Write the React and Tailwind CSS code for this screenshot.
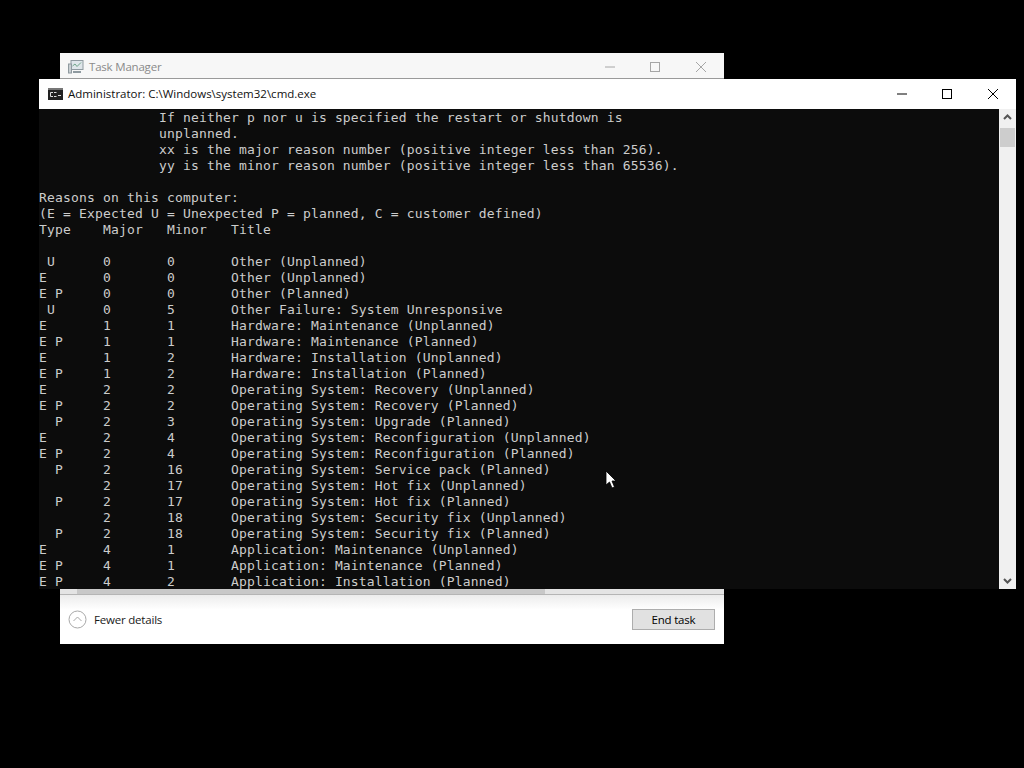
const lines = [
  "               If neither p nor u is specified the restart or shutdown is",
  "               unplanned.",
  "               xx is the major reason number (positive integer less than 256).",
  "               yy is the minor reason number (positive integer less than 65536).",
  "",
  "Reasons on this computer:",
  "(E = Expected U = Unexpected P = planned, C = customer defined)",
  "Type    Major   Minor   Title",
  "",
  " U      0       0       Other (Unplanned)",
  "E       0       0       Other (Unplanned)",
  "E P     0       0       Other (Planned)",
  " U      0       5       Other Failure: System Unresponsive",
  "E       1       1       Hardware: Maintenance (Unplanned)",
  "E P     1       1       Hardware: Maintenance (Planned)",
  "E       1       2       Hardware: Installation (Unplanned)",
  "E P     1       2       Hardware: Installation (Planned)",
  "E       2       2       Operating System: Recovery (Unplanned)",
  "E P     2       2       Operating System: Recovery (Planned)",
  "  P     2       3       Operating System: Upgrade (Planned)",
  "E       2       4       Operating System: Reconfiguration (Unplanned)",
  "E P     2       4       Operating System: Reconfiguration (Planned)",
  "  P     2       16      Operating System: Service pack (Planned)",
  "        2       17      Operating System: Hot fix (Unplanned)",
  "  P     2       17      Operating System: Hot fix (Planned)",
  "        2       18      Operating System: Security fix (Unplanned)",
  "  P     2       18      Operating System: Security fix (Planned)",
  "E       4       1       Application: Maintenance (Unplanned)",
  "E P     4       1       Application: Maintenance (Planned)",
  "E P     4       2       Application: Installation (Planned)",
];

function Caption({ dim }) {
  const c = dim ? "#a6a6a6" : "#000000";
  return (
    <div className="flex h-full items-center">
      <svg width="46" height="12" viewBox="0 0 46 12">
        <path d="M19 6h10" stroke={c} strokeWidth="1" />
      </svg>
      <svg width="46" height="12" viewBox="0 0 12 12" preserveAspectRatio="xMidYMid meet">
        <rect x="1.5" y="1.5" width="9" height="9" fill="none" stroke={c} strokeWidth="1" />
      </svg>
      <svg width="46" height="12" viewBox="0 0 12 12">
        <path d="M1 1l10 10M11 1L1 11" stroke={c} strokeWidth="1" />
      </svg>
    </div>
  );
}

export default function App() {
  return (
    <div className="relative w-[1024px] h-[768px] bg-black overflow-hidden font-['Open_Sans','Noto_Sans',sans-serif]">
      {/* Task Manager window */}
      <div className="absolute left-[60px] top-[53px] w-[664px] h-[591px] bg-white flex flex-col">
        <div className="h-[26px] pt-[2px] flex items-center justify-between border-b border-[#9a9a9a] bg-[#f7f7f7]">
          <div className="flex items-center pl-[8px] gap-[5px]">
            <svg width="16" height="16" viewBox="0 0 16 16">
              <rect x="3" y="1.5" width="12" height="9" fill="#dfe6ea" stroke="#8f9aa0" />
              <path d="M4.5 7l2.5-2 2 2.5 4-4" fill="none" stroke="#6fa58a" />
              <rect x="0.5" y="5" width="3" height="9" fill="#c9cfd2" stroke="#8f9aa0" />
              <path d="M5 13h8" stroke="#8f9aa0" strokeWidth="2" />
            </svg>
            <span className="text-[11.5px] tracking-[-0.2px] text-[#8a8a8a] leading-none">Task Manager</span>
          </div>
          <Caption dim />
        </div>
        <div className="flex-1" />
        <div className="h-[6px] bg-[#e4e4e4] flex border-b border-[#b5b5b5]">
          <div className="w-[468px] bg-[#c8c8c8] ml-[17px]" />
        </div>
        <div className="h-[49px] flex items-center justify-between pl-[8px] pr-[9px] bg-gradient-to-b from-[#ececec] via-white via-30% to-white">
          <div className="flex items-center gap-[7px]">
            <svg width="19" height="19" viewBox="0 0 19 19">
              <circle cx="9.5" cy="9.5" r="8.5" fill="none" stroke="#a8a8a8" />
              <path d="M5.5 11l4-4 4 4" fill="none" stroke="#a8a8a8" />
            </svg>
            <span className="text-[11.5px] tracking-[-0.2px] text-[#1a1a1a] leading-none">Fewer details</span>
          </div>
          <button className="w-[83px] h-[21px] bg-[#e1e1e1] border border-[#adadad] text-[11.5px] tracking-[-0.2px] text-black leading-none">
            End task
          </button>
        </div>
      </div>

      {/* cmd.exe window */}
      <div className="absolute left-[39px] top-[79px] w-[977px] h-[510px] flex flex-col bg-[#0c0c0c]">
        <div className="h-[30px] bg-white flex items-center justify-between">
          <div className="flex items-center pl-[9px] gap-[5px]">
            <svg width="15" height="12" viewBox="0 0 15 12">
              <rect width="15" height="12" fill="#222" />
              <rect x="0" y="0" width="15" height="2" fill="#777" />
              <path d="M5 4.500H2.500v4H5M6 4.500h2.500M6 8.500h2.500" fill="none" stroke="#ddd" />
              <path d="M10 7.500h3" stroke="#ddd" />
            </svg>
            <span className="text-[11.5px] text-[#111] leading-none">Administrator: C:\Windows\system32\cmd.exe</span>
          </div>
          <Caption />
        </div>
        <div className="flex-1 flex min-h-0">
          <pre className="flex-1 overflow-hidden pt-px font-['DejaVu_Sans_Mono',monospace] text-[13px] tracking-[0.17px] leading-[16px] text-[#cccccc]">
            {lines.join("\n")}
          </pre>
          <div className="w-[17px] bg-[#f0f0f0] flex flex-col items-center justify-between relative">
            <svg width="17" height="17" viewBox="0 0 17 17">
              <path d="M5 10l3.500-3.500L12 10" fill="none" stroke="#555" strokeWidth="2" />
            </svg>
            <div className="absolute top-[19px] left-[1px] w-[15px] h-[19px] bg-[#cdcdcd]" />
            <svg width="17" height="17" viewBox="0 0 17 17">
              <path d="M5 7l3.500 3.500L12 7" fill="none" stroke="#555" strokeWidth="2" />
            </svg>
          </div>
        </div>
      </div>

      {/* Mouse pointer */}
      <svg className="absolute left-[605px] top-[470px]" width="13" height="19" viewBox="0 0 13 19">
        <path d="M1 1v14l3.500-3 2.500 6 2.500-1-2.500-6H11z" fill="#fff" stroke="#000" strokeWidth="0.8" />
      </svg>
    </div>
  );
}
